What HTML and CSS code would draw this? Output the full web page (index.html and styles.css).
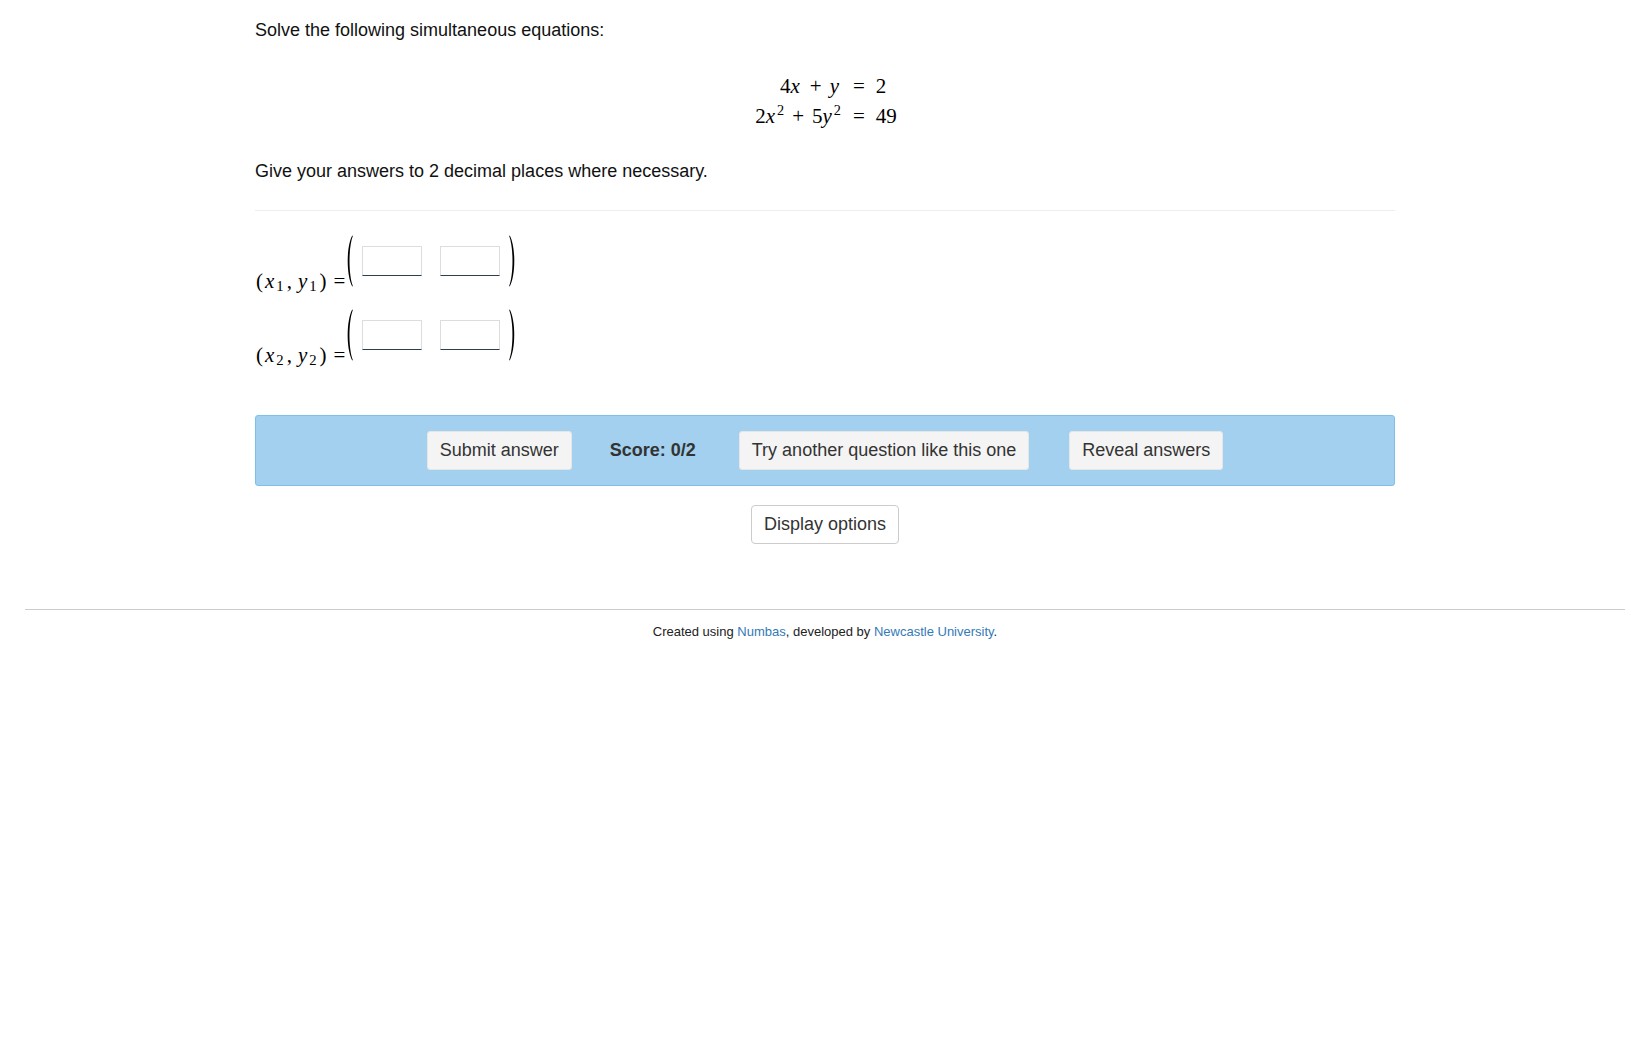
FILE: index.html
```html
<!DOCTYPE html>
<html lang="en">
<head>
<meta charset="utf-8">
<title>Simultaneous equations</title>
<link rel="stylesheet" href="styles.css">
</head>
<body>
<main class="container">
  <p class="statement first">Solve the following simultaneous equations:</p>
  <div class="display-eq">
    <div class="eq-grid">
      <span class="lhs">4<i>x</i><span class="op">+</span><i>y</i></span><span class="rhs"><span class="rel">=</span>2</span>
      <span class="lhs">2<i>x</i><sup>2</sup><span class="op">+</span>5<i>y</i><sup>2</sup></span><span class="rhs"><span class="rel">=</span>49</span>
    </div>
  </div>
  <p class="statement second">Give your answers to 2 decimal places where necessary.</p>
  <hr class="divider">

  <div class="answers">
    <div class="answer-row">
      <span class="math label">(<i>x</i><sub>1</sub>,<i class="yv">y</i><sub>1</sub>)<span class="rel">=</span></span>
      <span class="matrix">
        <svg class="paren" width="8" height="52" viewBox="0 0 8 52"><path d="M7.2 0.6 C1.2 12 1.2 40 7.2 51.4 L7.8 51 C3.4 39 3.4 13 7.8 1 Z"/></svg>
        <input class="cell" type="text">
        <input class="cell" type="text">
        <svg class="paren" width="8" height="52" viewBox="0 0 8 52"><path d="M0.8 0.6 C6.8 12 6.8 40 0.8 51.4 L0.2 51 C4.6 39 4.6 13 0.2 1 Z"/></svg>
      </span>
    </div>
    <div class="answer-row">
      <span class="math label">(<i>x</i><sub>2</sub>,<i class="yv">y</i><sub>2</sub>)<span class="rel">=</span></span>
      <span class="matrix">
        <svg class="paren" width="8" height="52" viewBox="0 0 8 52"><path d="M7.2 0.6 C1.2 12 1.2 40 7.2 51.4 L7.8 51 C3.4 39 3.4 13 7.8 1 Z"/></svg>
        <input class="cell" type="text">
        <input class="cell" type="text">
        <svg class="paren" width="8" height="52" viewBox="0 0 8 52"><path d="M0.8 0.6 C6.8 12 6.8 40 0.8 51.4 L0.2 51 C4.6 39 4.6 13 0.2 1 Z"/></svg>
      </span>
    </div>
  </div>

  <div class="submit-bar">
    <button class="btn">Submit answer</button>
    <span class="score">Score: 0/2</span>
    <button class="btn">Try another question like this one</button>
    <button class="btn">Reveal answers</button>
  </div>

  <div class="options">
    <button class="btn btn-outline">Display options</button>
  </div>
</main>

<footer class="footer">
  <p>Created using <a href="#">Numbas</a>, developed by <a href="#">Newcastle University</a>.</p>
</footer>
</body>
</html>
```

FILE: styles.css
```css
* { box-sizing: border-box; }

html, body {
  margin: 0;
  padding: 0;
  background: #fff;
}

body {
  font-family: "Liberation Sans", Arial, sans-serif;
  font-size: 18px;
  line-height: 1.42857;
  color: #111;
}

.container {
  width: 1170px;
  margin: 0 auto;
  padding: 0 15px;
}

.statement {
  margin: 0;
}

.statement.first {
  padding-top: 18px;
}

.statement.second {
  padding-top: 1px;
}

/* display equations */
.display-eq {
  margin: 27px 0 27px;
  display: flex;
  justify-content: center;
  font-family: "Liberation Serif", "Times New Roman", serif;
  font-size: 21px;
  line-height: 30px;
  color: #000;
}

.eq-grid {
  display: grid;
  grid-template-columns: auto auto;
  margin-left: 2px;
}

.lhs { text-align: right; }
.rhs { text-align: left; }

.display-eq i, .math i {
  font-style: italic;
  padding-right: 2px;
}

.display-eq .op {
  margin: 0 8px;
}

.display-eq .rel {
  margin: 0 11px 0 12px;
}

.display-eq sup {
  font-size: 0.68em;
  vertical-align: 0.55em;
  line-height: 0;
}

.divider {
  border: 0;
  border-top: 1px solid #eee;
  margin: 26px 0 24px;
}

/* answer rows */
.answers {
  display: flex;
  flex-direction: column;
  gap: 16px;
}

.answer-row {
  display: flex;
  align-items: flex-end;
}

.math {
  font-family: "Liberation Serif", "Times New Roman", serif;
  font-size: 21px;
  line-height: 20px;
  color: #000;
}

.label {
  padding-left: 1px;
  padding-bottom: 2px;
}

.label i { padding-right: 2px; margin-left: 2px; }
.label .yv { margin-left: 6px; }

.label sub {
  font-size: 0.7em;
  vertical-align: -0.2em;
  line-height: 0;
  margin-right: 3px;
}

.label .rel {
  margin: 0 0 0 7px;
}

.matrix {
  display: flex;
  align-items: center;
  margin-bottom: 6px;
  margin-left: 0;
}

.paren {
  display: block;
  fill: #000;
}

.cell {
  width: 60px;
  height: 30px;
  border: 1px solid #ddd;
  border-bottom: 1px solid #2c3e50;
  background: #fff;
  padding: 0 4px;
  margin: 0 0 0 9px;
  font-size: 16px;
}

.cell + .cell {
  margin-left: 18px;
  margin-right: 9px;
}

/* submit bar */
.submit-bar {
  margin-top: 48px;
  background: #a2d0ee;
  border: 1px solid #7fc0ea;
  border-radius: 3px;
  padding: 15px;
  display: flex;
  justify-content: center;
  align-items: center;
  gap: 40px;
}

.btn {
  font-family: "Liberation Sans", Arial, sans-serif;
  font-size: 18px;
  line-height: 25px;
  padding: 6px 12px;
  color: #333;
  background: #f4f4f4;
  border: 1px solid #e6e6e6;
  border-radius: 3px;
  cursor: pointer;
}

.score {
  font-weight: bold;
  color: #333;
  margin: 0 3px 0 -2px;
}

.options {
  margin-top: 19px;
  display: flex;
  justify-content: center;
}

.btn-outline {
  background: #fff;
  border: 1px solid #ccc;
  border-radius: 4px;
}

/* footer */
.footer {
  margin: 65px 25px 0;
  border-top: 1px solid #ccc;
  text-align: center;
  font-size: 13px;
  line-height: 20px;
  color: #222;
}

.footer p {
  margin: 12px 0 0;
}

.footer a {
  color: #337ab7;
  text-decoration: none;
}
```
